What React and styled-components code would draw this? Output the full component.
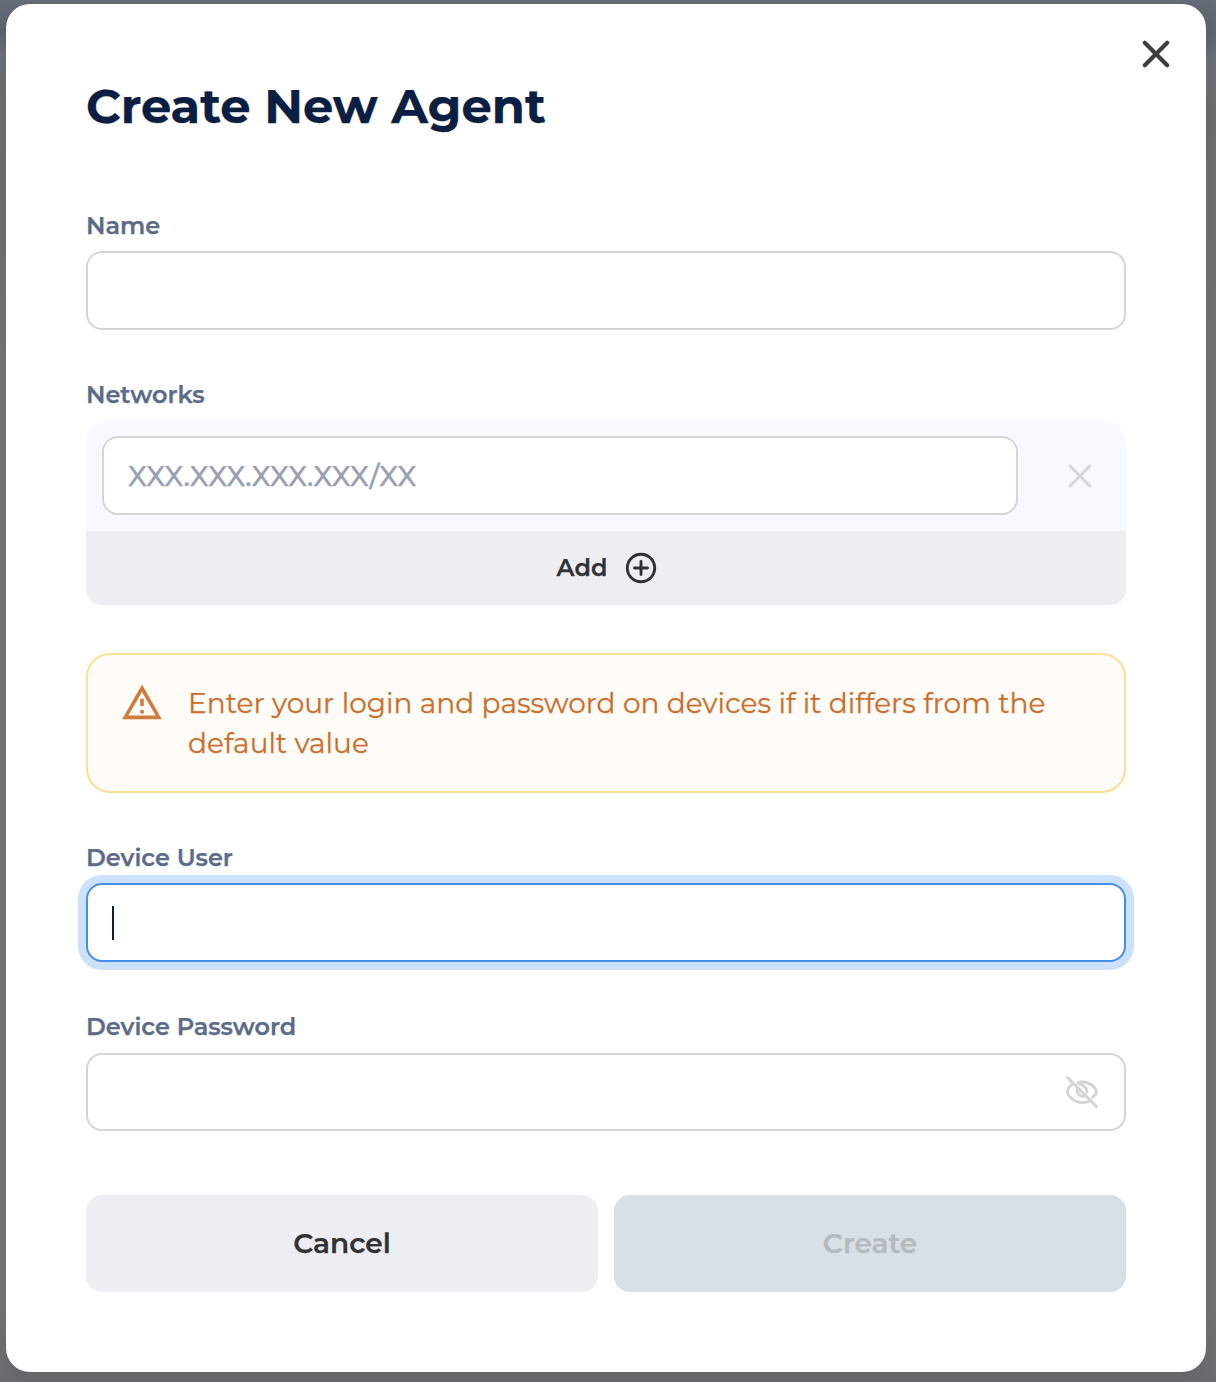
import React from "react";
import styled, { createGlobalStyle } from "styled-components";

const GlobalStyle = createGlobalStyle`
  *, *::before, *::after { box-sizing: border-box; }
  body { margin: 0; background: #707070; }
  button, input { font-family: inherit; }
`;

const Backdrop = styled.div`
  height: 1382px;
  padding: 4px 10px 10px 6px;
  overflow: hidden;
  font-family: Montserrat, Inter, sans-serif;
  -webkit-text-stroke: 0.25px currentColor;
  background: linear-gradient(180deg, #666c78 0, #5b6470 30px, #6b707c 55px, #707073 85px, #6e6e6e 110px, #757575 400px, #757575 1300px, #6d6d6f 1382px);
`;

const Modal = styled.main`
  position: relative;
  height: 1368px;
  padding: 72px 80px 80px;
  border-radius: 24px;
  background: #fff;
  box-shadow: 0 8px 24px rgba(0, 0, 0, 0.1);
`;

const CloseButton = styled.button`
  position: absolute;
  top: 30px;
  right: 30px;
  display: flex;
  padding: 0;
  border: 0;
  background: none;
  color: #3c3d40;
`;

const Title = styled.h1`
  margin: 0 0 74px;
  height: 60px;
  line-height: 60px;
  font-size: 48px;
  font-weight: 700;
  white-space: nowrap;
  color: #0c1e42;
`;

const Field = styled.section`
  height: ${(p) => p.$height}px;
  margin-bottom: ${(p) => p.$gap}px;
`;

const Label = styled.label`
  display: block;
  height: 32px;
  margin-bottom: ${(p) => p.$gap || 9}px;
  line-height: 32px;
  font-size: 24px;
  font-weight: 600;
  color: #5d6b88;
`;

const InputBox = styled.div`
  display: flex;
  align-items: center;
  justify-content: space-between;
  height: ${(p) => p.$height || 79}px;
  width: ${(p) => p.$width || "100%"};
  padding: 0 ${(p) => p.$right || 24}px 0 24px;
  border: 2px solid ${(p) => (p.$focused ? "#458eec" : "#d5d5d6")};
  border-radius: 16px;
  background: #fff;
  box-shadow: ${(p) => (p.$focused ? "0 0 0 8px #cbe1fc" : "none")};
`;

const Input = styled.input`
  flex: 1;
  min-width: 0;
  padding: 0;
  border: 0;
  outline: 0;
  background: transparent;
  font-size: 28px;
  font-weight: 500;
  color: #0c1e42;
  &::placeholder { color: #97a1b3; opacity: 1; }
`;

const Caret = styled.span`
  width: 2px;
  height: 34px;
  background: #0c1e42;
`;

const Networks = styled.div`
  height: 185px;
  overflow: hidden;
  border-radius: 24px 24px 16px 16px;
  background: #f6f9ff;
`;

const NetworkRow = styled.div`
  display: flex;
  align-items: center;
  height: 111px;
  padding: 0 30px 0 16px;
`;

const RemoveButton = styled.button`
  display: flex;
  margin-left: auto;
  padding: 0;
  border: 0;
  background: none;
  color: #d4d4d4;
`;

const AddButton = styled.button`
  display: flex;
  align-items: center;
  justify-content: center;
  gap: 18px;
  width: 100%;
  height: 74px;
  padding: 0 0 0 2px;
  border: 0;
  background: #edeef2;
  font-size: 24px;
  font-weight: 600;
  color: #303235;
`;

const AddText = styled.span`
  padding-bottom: 2px;
`;

const Alert = styled.div`
  display: flex;
  height: 140px;
  margin-bottom: 49px;
  padding: 28px 34px;
  border: 2px solid #f9e096;
  border-radius: 24px;
  background: #fefcf7;
  color: #cc6d2b;
`;

const AlertIcon = styled.svg`
  flex: none;
  width: 40px;
  height: 36px;
  margin: 1px 26px 0 0;
`;

const AlertText = styled.p`
  margin: 0;
  line-height: 40px;
  font-size: 28px;
  white-space: nowrap;
`;

const Actions = styled.footer`
  display: grid;
  grid-template-columns: 1fr 1fr;
  gap: 16px;
`;

const ActionButton = styled.button`
  height: 97px;
  padding: 0 0 2px;
  border: 0;
  border-radius: 16px;
  background: ${(p) => (p.disabled ? "#d8dfe5" : "#edeef2")};
  color: ${(p) => (p.disabled ? "#b5babf" : "#303235")};
  font-size: 28px;
  font-weight: 600;
`;

const Cross = ({ size, reach, stroke }) => (
  <svg width={size} height={size} viewBox={`0 0 ${size} ${size}`} fill="none" stroke="currentColor" strokeWidth={stroke} strokeLinecap="round">
    <path d={`M${size / 2 - reach} ${size / 2 - reach}l${reach * 2} ${reach * 2}m0 ${-reach * 2}l${-reach * 2} ${reach * 2}`} />
  </svg>
);

const PlusCircle = () => (
  <svg width="32" height="32" viewBox="0 0 32 32" fill="none" stroke="currentColor" strokeWidth="2.9" strokeLinecap="round">
    <circle cx="16" cy="16" r="13.7" />
    <path d="M16 9.5v13M9.5 16h13" />
  </svg>
);

const EyeOff = () => (
  <svg width="34" height="34" viewBox="0 0 34 34" fill="none" stroke="#d4d4d4" strokeWidth="2.8" strokeLinecap="round" strokeLinejoin="round">
    <path d="M2.5 2.500l29 29" />
    <path d="M7 9.300C4 11.700 2.500 14.600 2.500 17c0 3.200 6.300 10.700 15 10.700 2.500 0 4.600-.6 6.300-1.500" />
    <path d="M13 7.800c1.300-.6 2.800-.8 4.300-.8C25.500 7 31.500 13.500 31.500 17c0 1.500-1.400 3.400-3.900 5.200" />
    <path d="M12.900 13.300c-2.200 4.100 1.400 9 6.500 7.800M13.700 8.400c4.800 1.700 8.100 4.400 8.300 8.600" />
  </svg>
);

export default function App() {
  return (
    <>
      <GlobalStyle />
      <Backdrop>
        <Modal>
          <CloseButton aria-label="Close"><Cross size={40} reach={11.2} stroke={4.2} /></CloseButton>
          <Title>Create New Agent</Title>
          <Field $height={119} $gap={50}>
            <Label>Name</Label>
            <InputBox><Input /></InputBox>
          </Field>
          <Field $height={226} $gap={48}>
            <Label>Networks</Label>
            <Networks>
              <NetworkRow>
                <InputBox $width="916px"><Input placeholder="XXX.XXX.XXX.XXX/XX" /></InputBox>
                <RemoveButton aria-label="Remove"><Cross size={32} reach={9.7} stroke={3} /></RemoveButton>
              </NetworkRow>
              <AddButton><AddText>Add</AddText><PlusCircle /></AddButton>
            </Networks>
          </Field>
          <Alert>
            <AlertIcon viewBox="0 0 40 36">
              <path fill="currentColor" opacity=".9" fillRule="evenodd" d="M20 .6 39.800 35.200H.2ZM20 8 6.300 31.400H33.700ZM18.200 14.700h3.600v7.200h-3.600ZM18.200 26h3.600v3.600h-3.600Z" />
            </AlertIcon>
            <AlertText>Enter your login and password on devices if it differs from the<br />default value</AlertText>
          </Alert>
          <Field $height={120} $gap={49}>
            <Label>Device User</Label>
            <InputBox $focused><Caret /></InputBox>
          </Field>
          <Field $height={120} $gap={64}>
            <Label $gap={10}>Device Password</Label>
            <InputBox $height={78} $right={25}><Input type="password" /><EyeOff /></InputBox>
          </Field>
          <Actions>
            <ActionButton>Cancel</ActionButton>
            <ActionButton disabled>Create</ActionButton>
          </Actions>
        </Modal>
      </Backdrop>
    </>
  );
}
